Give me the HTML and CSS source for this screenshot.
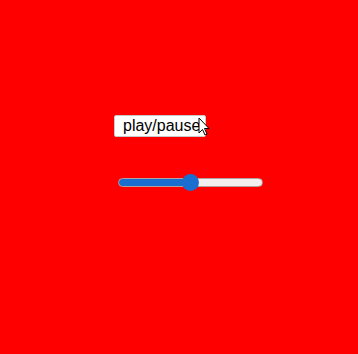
FILE: index.html
```html
<!DOCTYPE html>
<html lang="en">
<head>
  <meta charset="UTF-8" />
  <title>Player</title>
  <link rel="stylesheet" href="styles.css">
</head>
<body>
  <div class="player">
    <div class="btn-wrap">
      <button class="play-btn">play/pause</button>
      <svg class="cursor" viewBox="0 0 12 19" aria-hidden="true">
        <path d="M1 1 L1 16 L4.5 12.5 L7 18 L9 17 L6.5 11.5 L11 11.5 Z" fill="#fff" stroke="#000" stroke-width="1" stroke-linejoin="round"/>
      </svg>
    </div>
    <input class="volume" type="range" min="0" max="100" value="50" />
  </div>
</body>
</html>
```

FILE: styles.css
```css
html, body {
  height: 100%;
  margin: 0;
  background: #ff0000;
  font-family: 'Liberation Sans', Arial, sans-serif;
}

.player {
  display: flex;
  flex-direction: column;
  align-items: flex-start;
  padding: 115px 0 0 114px;
}

.btn-wrap {
  position: relative;
}

.play-btn {
  font-family: 'Liberation Sans', Arial, sans-serif;
  font-size: 16px;
  color: #000;
  background: #fff;
  border: 1px solid #c8c8c8;
  border-radius: 2px;
  height: 22px;
  width: 92px;
  padding: 0 0 0 8px;
  text-align: left;
  line-height: 20px;
}

.cursor {
  position: absolute;
  left: 84px;
  top: 2px;
  width: 12px;
  height: 19px;
}

.volume {
  -webkit-appearance: none;
  appearance: none;
  box-sizing: border-box;
  width: 145px;
  height: 9px;
  margin: 41px 0 0 4px;
  border: 1px solid #b0a0a0;
  border-radius: 5px;
  background: linear-gradient(to right, #1a6ed0 0 50%, #f5eeee 50% 100%);
  outline: none;
}

.volume::-webkit-slider-thumb {
  -webkit-appearance: none;
  width: 17px;
  height: 17px;
  border-radius: 50%;
  background: #1a6ed0;
  border: none;
}
```
